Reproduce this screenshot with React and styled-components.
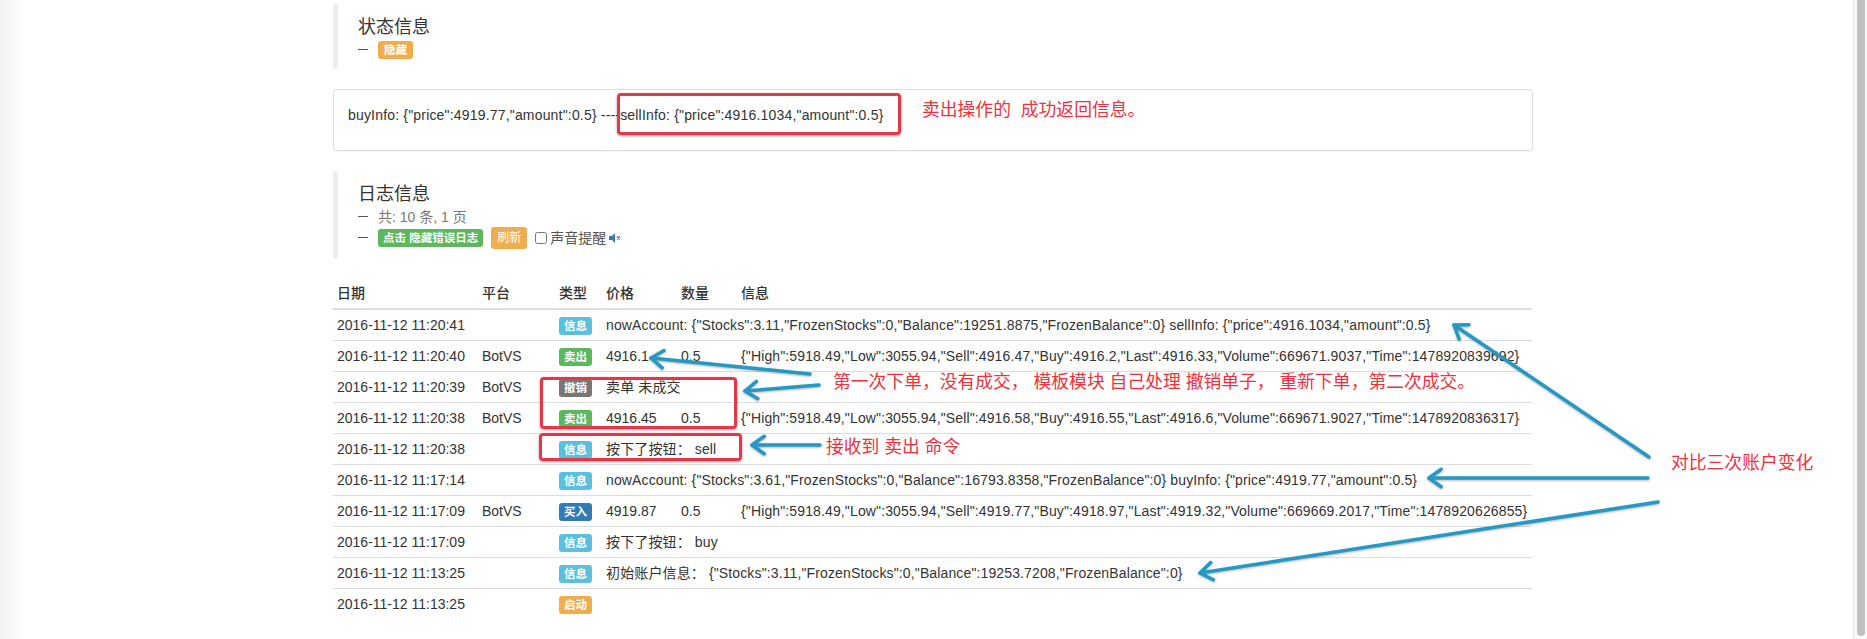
import React from 'react';
import styled, { createGlobalStyle } from 'styled-components';

const Global = createGlobalStyle`
  html, body {
    margin: 0;
    padding: 0;
    background: #fff;
    overflow: hidden;
  }
  body {
    font-family: "Liberation Sans", "Noto Sans CJK SC", sans-serif;
    font-size: 14px;
    line-height: 20px;
    color: #333;
  }
`;

const Page = styled.div`
  position: relative;
  box-sizing: border-box;
  width: 1867px;
  height: 639px;
  padding: 4px 334px 0 333px;
  overflow: hidden;
  background: linear-gradient(to right, #f2f2f2 0, #fff 26px);
`;

const Scrollbar = styled.div`
  position: absolute;
  top: 0;
  right: 0;
  bottom: 0;
  box-sizing: border-box;
  width: 14px;
  padding: 0 2px 3px 3px;
  background: #fafafa;
  border-left: 1px solid #e6e6e6;
`;

const ScrollThumb = styled.div`
  height: 100%;
  border-radius: 0 0 4px 4px;
  background: #c1c1c1;
`;

const Quote = styled.div`
  box-sizing: border-box;
  height: ${props => props.height}px;
  border-left: 5px solid #eee;
  padding: 12px 20px 0;
`;

const QuoteTitle = styled.h4`
  margin: 0 0 1px;
  font-size: 18px;
  font-weight: 400;
  line-height: 22px;
`;

const QuoteLine = styled.div`
  display: flex;
  align-items: center;
  gap: 8px;
  height: 21px;
  color: #777;
  font-size: 14px;
`;

const Dash = styled.span`
  width: 10px;
  height: 1px;
  margin-right: 2px;
  background: #555;
`;

const Label = styled.span`
  display: inline-block;
  box-sizing: border-box;
  height: 18px;
  padding: 0 ${props => props.pad || 5}px;
  border-radius: 3px;
  background: ${props => props.color};
  color: #fff;
  font-size: 11.5px;
  font-weight: 700;
  line-height: 18px;
  text-align: center;
  vertical-align: middle;
`;

const RefreshButton = styled.span`
  box-sizing: border-box;
  width: 36px;
  height: 22px;
  border-radius: 3px;
  background: #f0ad4e;
  color: #fff;
  font-size: 12px;
  line-height: 22px;
  text-align: center;
`;

const Sound = styled.label`
  display: flex;
  align-items: center;
  gap: 3px;
  color: #555;
`;

const Check = styled.input`
  width: 12px;
  height: 12px;
  margin: 0;
`;

const Panel = styled.div`
  box-sizing: border-box;
  height: 62px;
  margin: 20px 0;
  padding: 15px 14px;
  border: 1px solid #ddd;
  border-radius: 4px;
  letter-spacing: 0.18px;
  box-shadow: 0 1px 1px rgba(0, 0, 0, 0.05);
`;

const Table = styled.table`
  width: 1199px;
  margin-top: 20px;
  border-collapse: collapse;
  table-layout: fixed;
`;

const HeadCell = styled.th`
  height: 30px;
  padding: 0 5px 0 4px;
  border-bottom: 2px solid #ddd;
  font-size: 14px;
  font-weight: 500;
  line-height: 20px;
  text-align: left;
  white-space: nowrap;
`;

const Row = styled.tr`
  border-bottom: 1px solid #ddd;
  &:last-child {
    border-bottom: 0;
  }
`;

const Cell = styled.td`
  height: 30px;
  padding: 0 5px 0 4px;
  line-height: 20px;
  white-space: nowrap;
`;

const MessageCell = styled(Cell)`
  letter-spacing: 0.13px;
`;

const Note = styled.div`
  position: absolute;
  left: ${props => props.x}px;
  top: ${props => props.y}px;
  color: #f0313c;
  font-size: 17.8px;
  line-height: 24px;
  white-space: pre;
`;

const Mark = styled.div`
  position: absolute;
  left: ${props => props.x}px;
  top: ${props => props.y}px;
  width: ${props => props.w}px;
  height: ${props => props.h}px;
  box-sizing: border-box;
  border: 3px solid #ea3546;
  border-radius: 4px;
  box-shadow: 0 1px 3px rgba(0, 0, 0, 0.35);
`;

const Arrows = styled.svg`
  position: absolute;
  left: 0;
  top: 0;
  pointer-events: none;
  filter: drop-shadow(0 1px 1px rgba(0, 0, 0, 0.3));
`;

const colors = {
  info: '#5bc0de',
  sell: '#5cb85c',
  buy: '#337ab7',
  cancel: '#777',
  start: '#f0ad4e',
};

const rows = [
  { date: '2016-11-12 11:20:41', type: '信息', color: colors.info, msg: 'nowAccount: {"Stocks":3.11,"FrozenStocks":0,"Balance":19251.8875,"FrozenBalance":0} sellInfo: {"price":4916.1034,"amount":0.5}' },
  { date: '2016-11-12 11:20:40', platform: 'BotVS', type: '卖出', color: colors.sell, price: '4916.1', amount: '0.5', info: '{"High":5918.49,"Low":3055.94,"Sell":4916.47,"Buy":4916.2,"Last":4916.33,"Volume":669671.9037,"Time":1478920839692}' },
  { date: '2016-11-12 11:20:39', platform: 'BotVS', type: '撤销', color: colors.cancel, msg: '卖单 未成交' },
  { date: '2016-11-12 11:20:38', platform: 'BotVS', type: '卖出', color: colors.sell, price: '4916.45', amount: '0.5', info: '{"High":5918.49,"Low":3055.94,"Sell":4916.58,"Buy":4916.55,"Last":4916.6,"Volume":669671.9027,"Time":1478920836317}' },
  { date: '2016-11-12 11:20:38', type: '信息', color: colors.info, msg: '按下了按钮：  sell' },
  { date: '2016-11-12 11:17:14', type: '信息', color: colors.info, msg: 'nowAccount: {"Stocks":3.61,"FrozenStocks":0,"Balance":16793.8358,"FrozenBalance":0} buyInfo: {"price":4919.77,"amount":0.5}' },
  { date: '2016-11-12 11:17:09', platform: 'BotVS', type: '买入', color: colors.buy, price: '4919.87', amount: '0.5', info: '{"High":5918.49,"Low":3055.94,"Sell":4919.77,"Buy":4918.97,"Last":4919.32,"Volume":669669.2017,"Time":1478920626855}' },
  { date: '2016-11-12 11:17:09', type: '信息', color: colors.info, msg: '按下了按钮：  buy' },
  { date: '2016-11-12 11:13:25', type: '信息', color: colors.info, msg: '初始账户信息：  {"Stocks":3.11,"FrozenStocks":0,"Balance":19253.7208,"FrozenBalance":0}' },
  { date: '2016-11-12 11:13:25', type: '启动', color: colors.start, msg: '' },
];

const arrowLines = [
  [810, 374, 651, 358],
  [819, 385, 745, 391],
  [820, 445, 752, 445],
  [1649, 457, 1454, 325],
  [1648, 478, 1429, 478],
  [1658, 502, 1200, 573],
];

const Arrow = ({ x1, y1, x2, y2 }) => {
  const angle = Math.atan2(y1 - y2, x1 - x2);
  const wing = d => [x2 + 15 * Math.cos(angle + d), y2 + 15 * Math.sin(angle + d)].join(',');
  return (
    <g fill="none" stroke="#2499c3" strokeWidth="3.5" strokeLinecap="round" strokeLinejoin="round">
      <path d={`M${x1} ${y1}L${x2} ${y2}`} />
      <path d={`M${wing(0.62)}L${x2} ${y2}L${wing(-0.62)}`} />
    </g>
  );
};

const App = () => (
  <Page>
    <Global />
    <Quote height={65}>
      <QuoteTitle>状态信息</QuoteTitle>
      <QuoteLine>
        <Dash />
        <Label color={colors.start} pad={6}>隐藏</Label>
      </QuoteLine>
    </Quote>
    <Panel>buyInfo: {'{"price":4919.77,"amount":0.5}'} ----sellInfo: {'{"price":4916.1034,"amount":0.5}'}</Panel>
    <Quote height={87}>
      <QuoteTitle>日志信息</QuoteTitle>
      <QuoteLine>
        <Dash />
        共: 10 条, 1 页
      </QuoteLine>
      <QuoteLine>
        <Dash />
        <Label color={colors.sell}>点击 隐藏错误日志</Label>
        <RefreshButton>刷新</RefreshButton>
        <Sound>
          <Check type="checkbox" readOnly />
          声音提醒
          <svg width="14" height="10" viewBox="0 0 14 10">
            <path d="M0 3h3l3-3v10L3 7H0z" fill="#337ab7" />
            <path d="M8 3.5l3 3M11 3.5l-3 3" stroke="#337ab7" strokeWidth="1.2" />
          </svg>
        </Sound>
      </QuoteLine>
    </Quote>
    <Table>
      <colgroup>
        <col width="145" />
        <col width="77" />
        <col width="47" />
        <col width="75" />
        <col width="60" />
        <col />
      </colgroup>
      <thead>
        <tr>
          {['日期', '平台', '类型', '价格', '数量', '信息'].map(h => (
            <HeadCell key={h}>{h}</HeadCell>
          ))}
        </tr>
      </thead>
      <tbody>
        {rows.map((r, i) => (
          <Row key={i}>
            <Cell>{r.date}</Cell>
            <Cell>{r.platform}</Cell>
            <Cell>
              <Label color={r.color}>{r.type}</Label>
            </Cell>
            {r.price ? (
              <>
                <Cell>{r.price}</Cell>
                <Cell>{r.amount}</Cell>
                <MessageCell>{r.info}</MessageCell>
              </>
            ) : (
              <MessageCell colSpan={3}>{r.msg}</MessageCell>
            )}
          </Row>
        ))}
      </tbody>
    </Table>

    <Mark x={617} y={93} w={284} h={42} />
    <Mark x={540} y={377} w={197} h={52} />
    <Mark x={539} y={433} w={203} h={28} />
    <Note x={922} y={98}>卖出操作的  成功返回信息。</Note>
    <Note x={833} y={370}>第一次下单，没有成交， 模板模块 自己处理 撤销单子， 重新下单，第二次成交。</Note>
    <Note x={826} y={435}>接收到 卖出 命令</Note>
    <Note x={1671} y={451}>对比三次账户变化</Note>
    <Arrows width="1867" height="639">
      {arrowLines.map(([x1, y1, x2, y2]) => (
        <Arrow key={`${x2}-${y2}`} x1={x1} y1={y1} x2={x2} y2={y2} />
      ))}
    </Arrows>
    <Scrollbar>
      <ScrollThumb />
    </Scrollbar>
  </Page>
);

export default App;
